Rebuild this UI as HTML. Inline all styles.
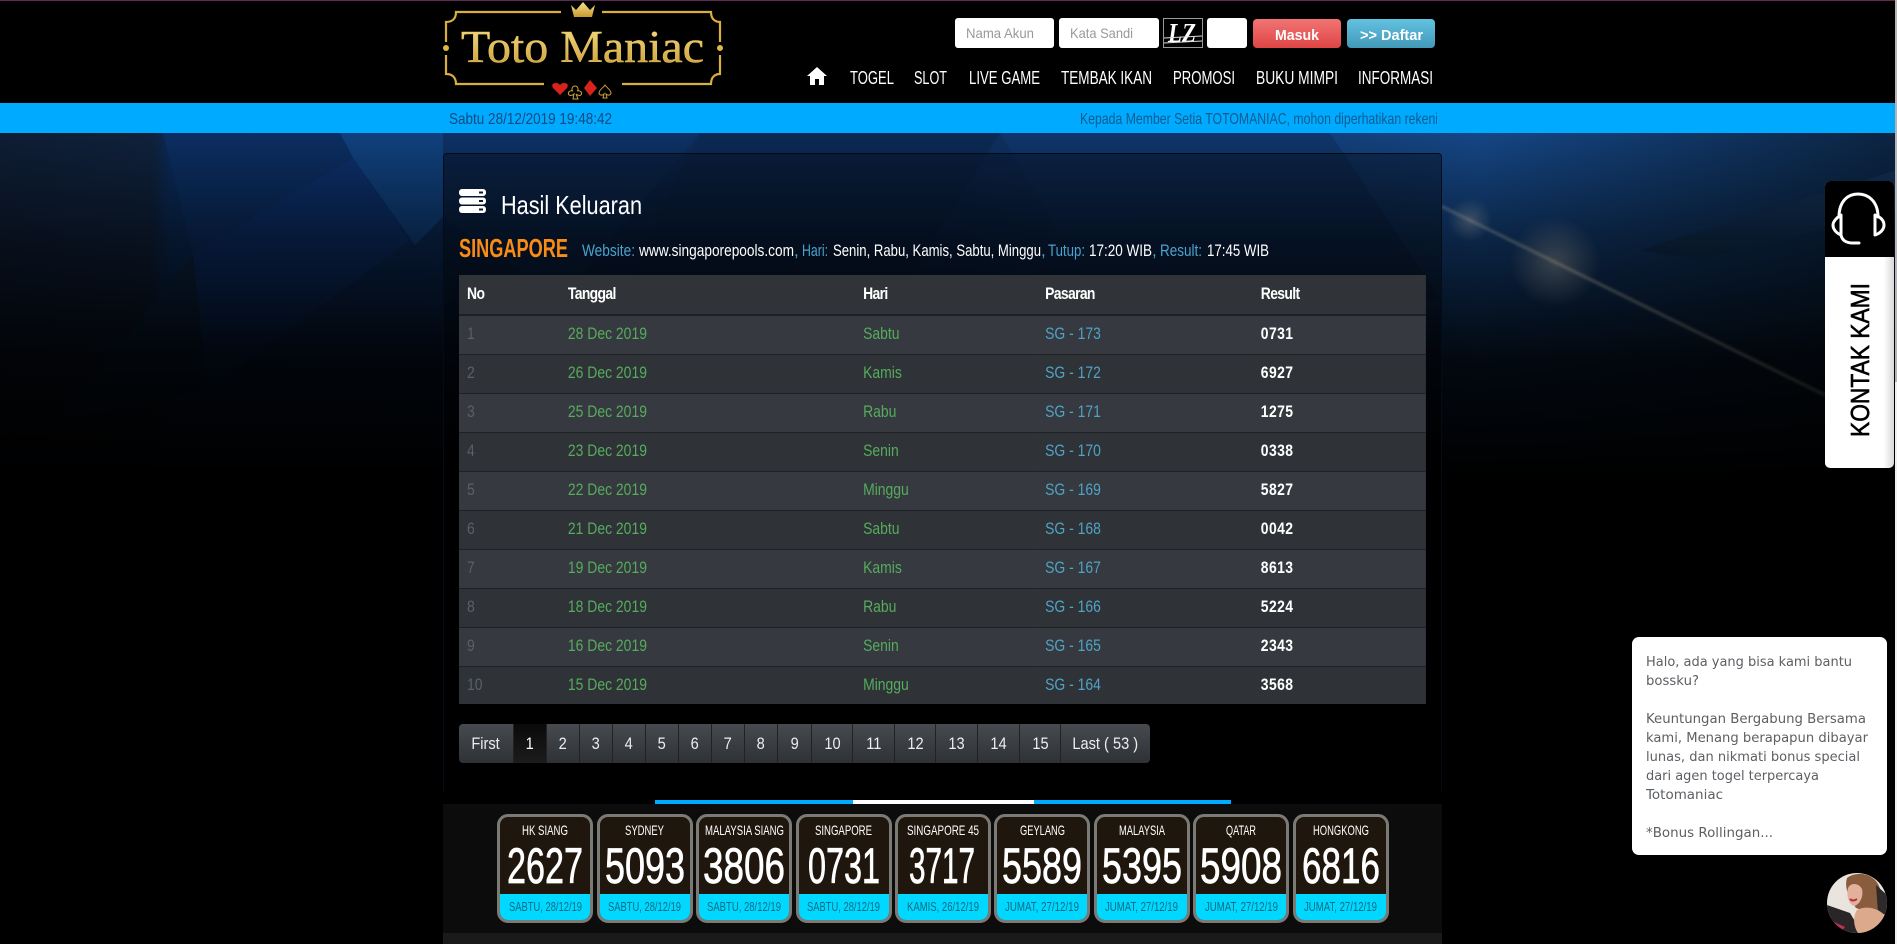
<!DOCTYPE html>
<html lang="id"><head><meta charset="utf-8"><title>Toto Maniac - Hasil Keluaran</title>
<style>
*{box-sizing:border-box}
html,body{margin:0;padding:0;width:1897px;height:944px;overflow:hidden;background:#000}
body{position:relative;font-family:"Liberation Sans",sans-serif}
.a{position:absolute}
svg text{font-family:"Liberation Sans",sans-serif}
svg .s{font-family:"Liberation Serif",serif}
svg .d{font-family:"DejaVu Sans",sans-serif}
table{position:absolute;left:459px;top:275px;width:1179px;border-collapse:collapse;table-layout:fixed;font-size:17px;color:#fff;transform:scaleX(.82);transform-origin:0 0;background:#363a40}
thead tr{background:#303438}
tbody tr{background:#363a40}
tbody tr:nth-child(even){background:#2f3338}
th{height:40px;border:0;border-bottom:2px solid #1e2124;text-align:left;padding:0 0 1px 9.8px;font-size:17px;letter-spacing:-.8px;font-weight:bold}
td{height:39px;padding:0 0 1px 9.8px;border:0;border-bottom:1px solid #1f2225}
tr:last-child td{height:38px;border-bottom:0}
td:nth-child(1){color:#5a6066}
td:nth-child(2),td:nth-child(3){color:#56ab5c}
td:nth-child(4){color:#4fa3c4}
td:nth-child(5){color:#fff;font-weight:bold;letter-spacing:.5px}
.pg{position:absolute;top:724px;height:39px;display:flex;align-items:center;justify-content:center;font-size:17px;color:#eee;background:linear-gradient(#474b4f,#2e3135);border-right:1px solid #222;white-space:nowrap}
.pg span{display:inline-block;transform:scaleX(.86)}
.pg.on{background:linear-gradient(#0a0a0a,#1c1c1c);color:#fff}
.btn{position:absolute;top:19px;height:29px;width:88px;border-radius:4px}
.inp{position:absolute;top:18px;height:30px;background:#fff;border-radius:3px}
.card{position:absolute;top:814px;width:96px;height:109px;border:3px solid #7b7a74;border-radius:11px;overflow:hidden;background:#1f170e}
.card i{position:absolute;left:0;right:0;bottom:0;height:26px;background:#00d8ff}
</style></head><body>

<!-- background -->
<svg class="a" style="left:0;top:0" width="1897" height="944" viewBox="0 0 1897 944">
<defs>
<linearGradient id="fade" x1="0" y1="133" x2="0" y2="480" gradientUnits="userSpaceOnUse">
<stop offset="0" stop-color="#000" stop-opacity=".05"/><stop offset=".3" stop-color="#000" stop-opacity=".5"/><stop offset=".65" stop-color="#000" stop-opacity=".88"/><stop offset="1" stop-color="#000"/></linearGradient>
<linearGradient id="base" x1="0" y1="0" x2="1897" y2="0" gradientUnits="userSpaceOnUse">
<stop offset="0" stop-color="#0f1f38"/><stop offset=".08" stop-color="#10233f"/><stop offset=".09" stop-color="#0b2c5c"/><stop offset=".5" stop-color="#0d3062"/><stop offset=".78" stop-color="#164a8c"/><stop offset="1" stop-color="#0c2646"/></linearGradient>
<linearGradient id="st" x1="1441" y1="206" x2="1825" y2="395" gradientUnits="userSpaceOnUse"><stop offset="0" stop-color="#a8a090" stop-opacity=".3"/><stop offset=".35" stop-color="#a89a80" stop-opacity=".35"/><stop offset="1" stop-color="#a89a80" stop-opacity=".14"/></linearGradient>
<radialGradient id="sp1" cx="1555" cy="262" r="45" gradientUnits="userSpaceOnUse"><stop offset="0" stop-color="#a89a80" stop-opacity=".3"/><stop offset="1" stop-color="#a89a80" stop-opacity="0"/></radialGradient>
<radialGradient id="sp2" cx="1470" cy="220" r="22" gradientUnits="userSpaceOnUse"><stop offset="0" stop-color="#a8a090" stop-opacity=".3"/><stop offset="1" stop-color="#a8a090" stop-opacity="0"/></radialGradient>
<filter id="bl" filterUnits="userSpaceOnUse" x="1400" y="180" width="460" height="240"><feGaussianBlur stdDeviation="1.2"/></filter>
</defs>
<rect width="1897" height="944" fill="#000"/>
<rect y="133" width="1897" height="400" fill="url(#base)"/>
<polygon points="163,133 340,133 353,158 193,253" fill="#0c3066"/>
<polygon points="193,253 353,158 410,240 207,390" fill="#0d3270"/>
<polygon points="340,133 443,133 443,217 415,245 353,158" fill="#114484"/>
<polygon points="60,420 193,253 207,390" fill="#0e2a4e"/>
<polygon points="443,133 700,133 560,300 443,217" fill="#0e346a"/>
<polygon points="700,133 1000,133 820,420 620,300" fill="#0c2c5a"/>
<polygon points="1000,133 1330,133 1441,300 1100,300" fill="#103870"/>
<polygon points="1640,250 1897,170 1897,210 1700,260" fill="#123258"/>
<rect y="133" width="1897" height="400" fill="url(#fade)"/>
<path d="M1441 206L1825 395" stroke="url(#st)" stroke-width="3" filter="url(#bl)" fill="none"/>
<rect x="1500" y="215" width="110" height="95" fill="url(#sp1)"/>
<rect x="1445" y="195" width="50" height="50" fill="url(#sp2)"/>
</svg>

<!-- header -->
<div class="a" style="left:0;top:0;width:1897px;height:103px;background:#000;border-top:1px solid #5e2a55"></div>
<div class="a" style="left:0;top:103px;width:1897px;height:30px;background:#00aaff"></div>

<!-- panel -->
<div class="a" style="left:443px;top:153px;width:999px;height:640px;background:linear-gradient(rgba(6,14,28,.45),rgba(0,0,0,.7) 50%,#000);border:1px solid rgba(5,12,25,.9);border-bottom:0;border-radius:4px 4px 0 0"></div>

<!-- form boxes -->
<div class="inp" style="left:955px;width:99px"></div>
<div class="inp" style="left:1059px;width:100px"></div>
<div class="a" style="left:1163px;top:18px;width:40px;height:30px;background:#000;border:1px solid #999"></div>
<div class="inp" style="left:1207px;width:40px"></div>
<div class="btn" style="left:1253px;background:linear-gradient(#f27474,#df4545)"></div>
<div class="btn" style="left:1347px;background:linear-gradient(#62c2e0,#4299b8)"></div>

<!-- results table -->
<table>
<colgroup><col style="width:123px"><col style="width:360px"><col style="width:222px"><col style="width:263px"><col></colgroup>
<thead><tr><th>No</th><th>Tanggal</th><th>Hari</th><th>Pasaran</th><th>Result</th></tr></thead>
<tbody>
<tr><td>1</td><td>28 Dec 2019</td><td>Sabtu</td><td>SG - 173</td><td>0731</td></tr>
<tr><td>2</td><td>26 Dec 2019</td><td>Kamis</td><td>SG - 172</td><td>6927</td></tr>
<tr><td>3</td><td>25 Dec 2019</td><td>Rabu</td><td>SG - 171</td><td>1275</td></tr>
<tr><td>4</td><td>23 Dec 2019</td><td>Senin</td><td>SG - 170</td><td>0338</td></tr>
<tr><td>5</td><td>22 Dec 2019</td><td>Minggu</td><td>SG - 169</td><td>5827</td></tr>
<tr><td>6</td><td>21 Dec 2019</td><td>Sabtu</td><td>SG - 168</td><td>0042</td></tr>
<tr><td>7</td><td>19 Dec 2019</td><td>Kamis</td><td>SG - 167</td><td>8613</td></tr>
<tr><td>8</td><td>18 Dec 2019</td><td>Rabu</td><td>SG - 166</td><td>5224</td></tr>
<tr><td>9</td><td>16 Dec 2019</td><td>Senin</td><td>SG - 165</td><td>2343</td></tr>
<tr><td>10</td><td>15 Dec 2019</td><td>Minggu</td><td>SG - 164</td><td>3568</td></tr>
</tbody></table>

<!-- pagination -->
<div class="pg" style="left:459px;width:55px;border-radius:4px 0 0 4px"><span>First</span></div>
<div class="pg on" style="left:514px;width:33px"><span>1</span></div>
<div class="pg" style="left:547px;width:33px"><span>2</span></div>
<div class="pg" style="left:580px;width:33px"><span>3</span></div>
<div class="pg" style="left:613px;width:33px"><span>4</span></div>
<div class="pg" style="left:646px;width:33px"><span>5</span></div>
<div class="pg" style="left:679px;width:33px"><span>6</span></div>
<div class="pg" style="left:712px;width:33px"><span>7</span></div>
<div class="pg" style="left:745px;width:33px"><span>8</span></div>
<div class="pg" style="left:778px;width:34px"><span>9</span></div>
<div class="pg" style="left:812px;width:41px"><span>10</span></div>
<div class="pg" style="left:853px;width:42px"><span>11</span></div>
<div class="pg" style="left:895px;width:41px"><span>12</span></div>
<div class="pg" style="left:936px;width:42px"><span>13</span></div>
<div class="pg" style="left:978px;width:42px"><span>14</span></div>
<div class="pg" style="left:1020px;width:41px"><span>15</span></div>
<div class="pg" style="left:1061px;width:89px;border-radius:0 4px 4px 0;border-right:0"><span>Last ( 53 )</span></div>

<!-- result strip -->
<div class="a" style="left:443px;top:793px;width:999px;height:11px;background:#000"></div>
<div class="a" style="left:443px;top:804px;width:999px;height:129px;background:#0c0c0c"></div>
<div class="a" style="left:443px;top:933px;width:999px;height:11px;background:#1a1a1a"></div>
<div class="a" style="left:655px;top:800px;width:198px;height:4px;background:#00aaff"></div>
<div class="a" style="left:853px;top:800px;width:181px;height:4px;background:#fff"></div>
<div class="a" style="left:1034px;top:800px;width:197px;height:4px;background:#00aaff"></div>
<div class="card" style="left:497px"><i></i></div>
<div class="card" style="left:597px"><i></i></div>
<div class="card" style="left:696px"><i></i></div>
<div class="card" style="left:796px"><i></i></div>
<div class="card" style="left:895px"><i></i></div>
<div class="card" style="left:994px"><i></i></div>
<div class="card" style="left:1094px"><i></i></div>
<div class="card" style="left:1193px"><i></i></div>
<div class="card" style="left:1293px"><i></i></div>

<!-- contact widget / chat -->
<div class="a" style="left:1825px;top:181px;width:69px;height:287px;border-radius:5px;overflow:hidden;background:linear-gradient(90deg,#fff 85%,#d8d8d8)"><div style="height:76px;background:#000"></div></div>
<div class="a" style="left:1632px;top:637px;width:255px;height:218px;border-radius:7px;background:#fff"></div>
<div class="a" style="left:1895px;top:0;width:2px;height:382px;background:#b5b5b5"></div>
<div class="a" style="left:1895px;top:382px;width:2px;height:562px;background:#f1f1f1"></div>

<!-- text + icons layer -->
<svg class="a" style="left:0;top:0" width="1897" height="944" viewBox="0 0 1897 944">
<defs>
<linearGradient id="gold" x1="0" y1="0" x2="0" y2="1"><stop offset="0" stop-color="#f6e28e"/><stop offset="1" stop-color="#c9982e"/></linearGradient>
<clipPath id="av"><circle cx="1857" cy="903" r="30"/></clipPath>
<clipPath id="mq"><rect x="1060" y="103" width="377" height="30"/></clipPath>
</defs>

<!-- logo -->
<g fill="none" stroke="#d8ae3c" stroke-width="2.2">
<path d="M561 12H456C456 19 452 22 446 22V42"/>
<path d="M602 12H711C711 19 715 22 720 22V42"/>
<path d="M446 55V74C452 74 456 77 456 84H544"/>
<path d="M720 55V74C715 74 711 77 711 84H622"/>
</g>
<circle cx="446" cy="48" r="3" fill="#e0b840"/><circle cx="720" cy="48" r="3" fill="#e0b840"/>
<path d="M571 5L576 10L583 2L590 10L595 5L592 17H574Z" fill="url(#gold)"/>
<text class="s" x="461" y="62" font-size="45" textLength="243" lengthAdjust="spacingAndGlyphs" fill="url(#gold)" stroke="#e6c25a" stroke-width=".5">Toto Maniac</text>
<path d="M560 95L553 88C551 85 553 83 556 83C558 83 559 84 560 85C561 84 562 83 564 83C567 83 569 85 567 88Z" fill="#d8231c"/>
<path d="M590 80L597 88L590 96L584 88Z" fill="#d8231c"/>
<g fill="none" stroke="#c9a038" stroke-width="1">
<path d="M575 86C572 86 571 90 573 91C570 90 568 92 568.500 94C569 96 572 96 574 94L573 99H578L576 94C578 96 581 96 581.500 94C582 92 580 90 577 91C579 90 578 86 575 86Z"/>
<path d="M605 85C603 88 599 90 599 93C599 95 602 96 604 94L603 98H607L606 94C608 96 611 95 611 93C611 90 607 88 605 85Z"/>
</g>

<!-- nav -->
<path d="M817 67L807 76H810V85H815V79H819V85H824V76H827Z" fill="#fff"/>
<g fill="#fff" font-size="18">
<text x="850" y="84" textLength="44" lengthAdjust="spacingAndGlyphs">TOGEL</text>
<text x="914" y="84" textLength="33" lengthAdjust="spacingAndGlyphs">SLOT</text>
<text x="969" y="84" textLength="71" lengthAdjust="spacingAndGlyphs">LIVE GAME</text>
<text x="1061" y="84" textLength="91" lengthAdjust="spacingAndGlyphs">TEMBAK IKAN</text>
<text x="1173" y="84" textLength="62" lengthAdjust="spacingAndGlyphs">PROMOSI</text>
<text x="1256" y="84" textLength="82" lengthAdjust="spacingAndGlyphs">BUKU MIMPI</text>
<text x="1358" y="84" textLength="75" lengthAdjust="spacingAndGlyphs">INFORMASI</text>
</g>

<!-- login -->
<text x="966" y="38" font-size="14" fill="#999" textLength="68" lengthAdjust="spacingAndGlyphs">Nama Akun</text>
<text x="1070" y="38" font-size="14" fill="#999" textLength="63" lengthAdjust="spacingAndGlyphs">Kata Sandi</text>
<text class="s" x="1168" y="42" font-size="27" font-weight="bold" font-style="italic" fill="#fff" textLength="28" lengthAdjust="spacingAndGlyphs">LZ</text>
<path d="M1164 38L1202 36M1164 43L1202 41" stroke="#ddd" stroke-width="1"/>
<text x="1275" y="40" font-size="15" font-weight="bold" fill="#fff" textLength="44" lengthAdjust="spacingAndGlyphs">Masuk</text>
<text x="1360" y="40" font-size="15" font-weight="bold" fill="#fff" textLength="63" lengthAdjust="spacingAndGlyphs">&gt;&gt; Daftar</text>

<!-- ticker -->
<text x="449" y="124" font-size="16" fill="#0f4a80" textLength="163" lengthAdjust="spacingAndGlyphs">Sabtu 28/12/2019 19:48:42</text>
<g clip-path="url(#mq)"><text x="1080" y="124" font-size="16" fill="#0c5c90" textLength="358" lengthAdjust="spacingAndGlyphs">Kepada Member Setia TOTOMANIAC, mohon diperhatikan rekeni</text></g>

<!-- heading -->
<g fill="#fff"><rect x="459" y="189" width="27" height="7" rx="3"/><rect x="459" y="197.500" width="27" height="7" rx="3"/><rect x="459" y="206" width="27" height="7" rx="3"/></g>
<g fill="#0b1a30"><rect x="479" y="191.500" width="4" height="2"/><rect x="479" y="200" width="4" height="2"/><rect x="479" y="208.500" width="4" height="2"/></g>
<text x="501" y="214" font-size="26" fill="#fff" textLength="141" lengthAdjust="spacingAndGlyphs">Hasil Keluaran</text>
<text x="459" y="257" font-size="26" font-weight="bold" fill="#fa8c16" textLength="109" lengthAdjust="spacingAndGlyphs">SINGAPORE</text>
<g font-size="17">
<text x="582" y="256" fill="#4aa3cf" textLength="53" lengthAdjust="spacingAndGlyphs">Website:</text>
<text x="639" y="256" fill="#fff" textLength="155" lengthAdjust="spacingAndGlyphs">www.singaporepools.com</text>
<text x="794" y="256" fill="#4aa3cf">,</text>
<text x="802" y="256" fill="#4aa3cf" textLength="26" lengthAdjust="spacingAndGlyphs">Hari:</text>
<text x="833" y="256" fill="#fff" textLength="208" lengthAdjust="spacingAndGlyphs">Senin, Rabu, Kamis, Sabtu, Minggu</text>
<text x="1041" y="256" fill="#4aa3cf">,</text>
<text x="1048" y="256" fill="#4aa3cf" textLength="37" lengthAdjust="spacingAndGlyphs">Tutup:</text>
<text x="1089" y="256" fill="#fff" textLength="63" lengthAdjust="spacingAndGlyphs">17:20 WIB</text>
<text x="1152" y="256" fill="#4aa3cf">,</text>
<text x="1160" y="256" fill="#4aa3cf" textLength="42" lengthAdjust="spacingAndGlyphs">Result:</text>
<text x="1207" y="256" fill="#fff" textLength="62" lengthAdjust="spacingAndGlyphs">17:45 WIB</text>
</g>

<!-- card labels -->
<g fill="#fff" font-size="14">
<text x="522" y="835" textLength="46" lengthAdjust="spacingAndGlyphs">HK SIANG</text>
<text x="625" y="835" textLength="39" lengthAdjust="spacingAndGlyphs">SYDNEY</text>
<text x="705" y="835" textLength="79" lengthAdjust="spacingAndGlyphs">MALAYSIA SIANG</text>
<text x="815" y="835" textLength="57" lengthAdjust="spacingAndGlyphs">SINGAPORE</text>
<text x="907" y="835" textLength="72" lengthAdjust="spacingAndGlyphs">SINGAPORE 45</text>
<text x="1020" y="835" textLength="45" lengthAdjust="spacingAndGlyphs">GEYLANG</text>
<text x="1119" y="835" textLength="46" lengthAdjust="spacingAndGlyphs">MALAYSIA</text>
<text x="1226" y="835" textLength="30" lengthAdjust="spacingAndGlyphs">QATAR</text>
<text x="1313" y="835" textLength="56" lengthAdjust="spacingAndGlyphs">HONGKONG</text>
</g>
<g fill="#fff" stroke="#fff" stroke-width=".7" font-size="50">
<text x="507" y="883" textLength="76" lengthAdjust="spacingAndGlyphs">2627</text>
<text x="605" y="883" textLength="80" lengthAdjust="spacingAndGlyphs">5093</text>
<text x="703" y="883" textLength="82" lengthAdjust="spacingAndGlyphs">3806</text>
<text x="808" y="883" textLength="72" lengthAdjust="spacingAndGlyphs">0731</text>
<text x="909" y="883" textLength="66" lengthAdjust="spacingAndGlyphs">3717</text>
<text x="1002" y="883" textLength="80" lengthAdjust="spacingAndGlyphs">5589</text>
<text x="1102" y="883" textLength="80" lengthAdjust="spacingAndGlyphs">5395</text>
<text x="1200" y="883" textLength="82" lengthAdjust="spacingAndGlyphs">5908</text>
<text x="1302" y="883" textLength="78" lengthAdjust="spacingAndGlyphs">6816</text>
</g>
<g fill="#0a6c84" font-size="13">
<text x="509" y="911" textLength="73" lengthAdjust="spacingAndGlyphs">SABTU, 28/12/19</text>
<text x="608" y="911" textLength="73" lengthAdjust="spacingAndGlyphs">SABTU, 28/12/19</text>
<text x="707" y="911" textLength="74" lengthAdjust="spacingAndGlyphs">SABTU, 28/12/19</text>
<text x="807" y="911" textLength="73" lengthAdjust="spacingAndGlyphs">SABTU, 28/12/19</text>
<text x="907" y="911" textLength="72" lengthAdjust="spacingAndGlyphs">KAMIS, 26/12/19</text>
<text x="1005" y="911" textLength="74" lengthAdjust="spacingAndGlyphs">JUMAT, 27/12/19</text>
<text x="1105" y="911" textLength="73" lengthAdjust="spacingAndGlyphs">JUMAT, 27/12/19</text>
<text x="1205" y="911" textLength="73" lengthAdjust="spacingAndGlyphs">JUMAT, 27/12/19</text>
<text x="1304" y="911" textLength="73" lengthAdjust="spacingAndGlyphs">JUMAT, 27/12/19</text>
</g>

<!-- headset -->
<g fill="none" stroke="#fff" stroke-width="3" stroke-linecap="round" stroke-linejoin="round">
<path d="M1839 217C1839 201 1848 194 1858 194C1868 194 1878 201 1878 217"/>
<path d="M1841 215C1836 218 1833 222 1833 225C1833 229 1836 233 1841 235Z"/>
<path d="M1875 215V235C1881 233 1884 229 1884 225C1884 221 1881 217 1875 215Z"/>
<path d="M1841 235C1842 240 1846 243 1853 243H1859"/>
</g>
<text transform="translate(1869 437) rotate(-90)" font-size="26" fill="#000" stroke="#000" stroke-width=".6" textLength="154" lengthAdjust="spacingAndGlyphs">KONTAK KAMI</text>

<!-- chat -->
<g class="chat" fill="#5c5f63" font-size="13.500">
<text class="d" x="1646" y="666" textLength="206" lengthAdjust="spacingAndGlyphs">Halo, ada yang bisa kami bantu</text>
<text class="d" x="1646" y="685" textLength="53" lengthAdjust="spacingAndGlyphs">bossku?</text>
<text class="d" x="1646" y="723" textLength="220" lengthAdjust="spacingAndGlyphs">Keuntungan Bergabung Bersama</text>
<text class="d" x="1646" y="742" textLength="222" lengthAdjust="spacingAndGlyphs">kami, Menang berapapun dibayar</text>
<text class="d" x="1646" y="761" textLength="214" lengthAdjust="spacingAndGlyphs">lunas, dan nikmati bonus special</text>
<text class="d" x="1646" y="780" textLength="173" lengthAdjust="spacingAndGlyphs">dari agen togel terpercaya</text>
<text class="d" x="1646" y="799" textLength="77" lengthAdjust="spacingAndGlyphs">Totomaniac</text>
<text class="d" x="1646" y="837" textLength="127" lengthAdjust="spacingAndGlyphs">*Bonus Rollingan...</text>
</g>

<!-- avatar -->
<g clip-path="url(#av)">
<rect x="1827" y="873" width="60" height="60" fill="#e9e5de"/>
<path d="M1827 905L1850 913L1862 933H1827Z" fill="#2a2628"/>
<path d="M1832 921L1845 927L1840 933H1830Z" fill="#c03050"/>
<path d="M1847 878C1856 871 1872 873 1878 884C1883 893 1883 907 1874 914L1856 908C1849 898 1844 888 1847 878Z" fill="#8a5c3e"/>
<path d="M1848 888C1851 882 1859 883 1862 889C1864 897 1859 905 1854 906C1849 905 1846 896 1848 888Z" fill="#e3b09c"/>
<path d="M1850 899Q1853 902 1857 899" stroke="#b03040" stroke-width="2" fill="none"/>
<path d="M1876 885L1887 895V915L1878 913Z" fill="#2e2a2c"/>
<path d="M1857 910C1866 905 1880 908 1887 918V933H1858C1853 926 1853 916 1857 910Z" fill="#dca98c"/>
</g>
</svg>
</body></html>
